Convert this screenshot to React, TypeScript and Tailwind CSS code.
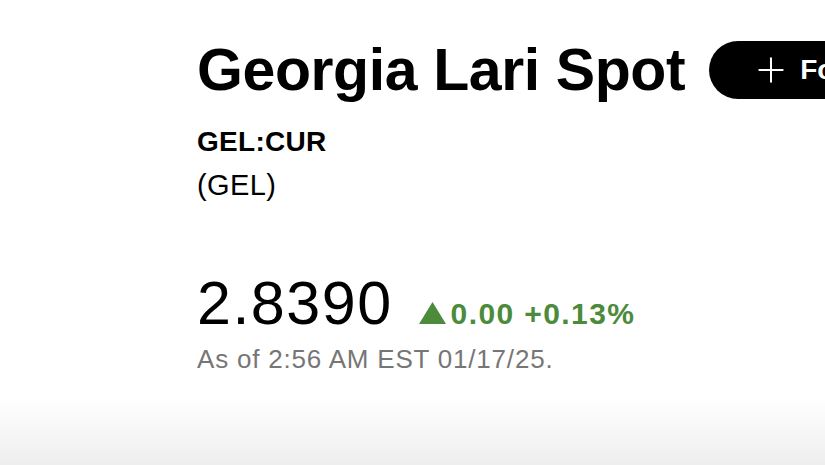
import React from 'react';
import { Plus } from 'lucide-react';

const font = { fontFamily: '"Liberation Sans", Arial, sans-serif' };

function UpTriangle() {
  return (
    <svg width="27" height="22" viewBox="0 0 27 22" className="shrink-0">
      <polygon points="13.5,0 27,22 0,22" fill="#4b8b3b" />
    </svg>
  );
}

export default function App() {
  return (
    <div className="flex h-[465px] w-[825px] flex-col overflow-hidden bg-white text-black" style={font}>
      <div className="pl-[197px] pt-[40px]">
        {/* title row */}
        <div className="flex items-center gap-[24px] whitespace-nowrap">
          <h1 className="text-[59px] font-bold leading-[60px] tracking-[-0.4px]">Georgia Lari Spot</h1>
          <button className="flex h-[58px] shrink-0 items-center gap-[9px] rounded-full bg-black pl-[42px] pr-[40px] text-[28px] font-bold text-white">
            <Plus size={40} strokeWidth={1.2} />
            <span>Follow</span>
          </button>
        </div>

        <div className="mt-[26px] text-[28px] font-bold leading-[32px] tracking-[0.3px]">GEL:CUR</div>
        <div className="mt-[11px] text-[29px] leading-[32px] tracking-[0.4px]">(GEL)</div>

        {/* quote */}
        <div className="mt-[72px] flex h-[60px] items-baseline whitespace-nowrap">
          <span className="text-[61px] leading-[60px] tracking-[1.5px]">2.8390</span>
          <span className="ml-[26px] flex items-baseline gap-[5px] text-[30px] font-bold leading-[60px] tracking-[1.4px] text-[#4b8b3b]">
            <UpTriangle />
            <span>0.00 +0.13%</span>
          </span>
        </div>
        <div className="mt-[11px] text-[26px] leading-[30px] tracking-[0.8px] text-[#767676]">
          As of 2:56 AM EST 01/17/25.
        </div>
      </div>

      <div className="mt-auto h-[68px] bg-gradient-to-b from-white to-[#eeeeee]" />
    </div>
  );
}
